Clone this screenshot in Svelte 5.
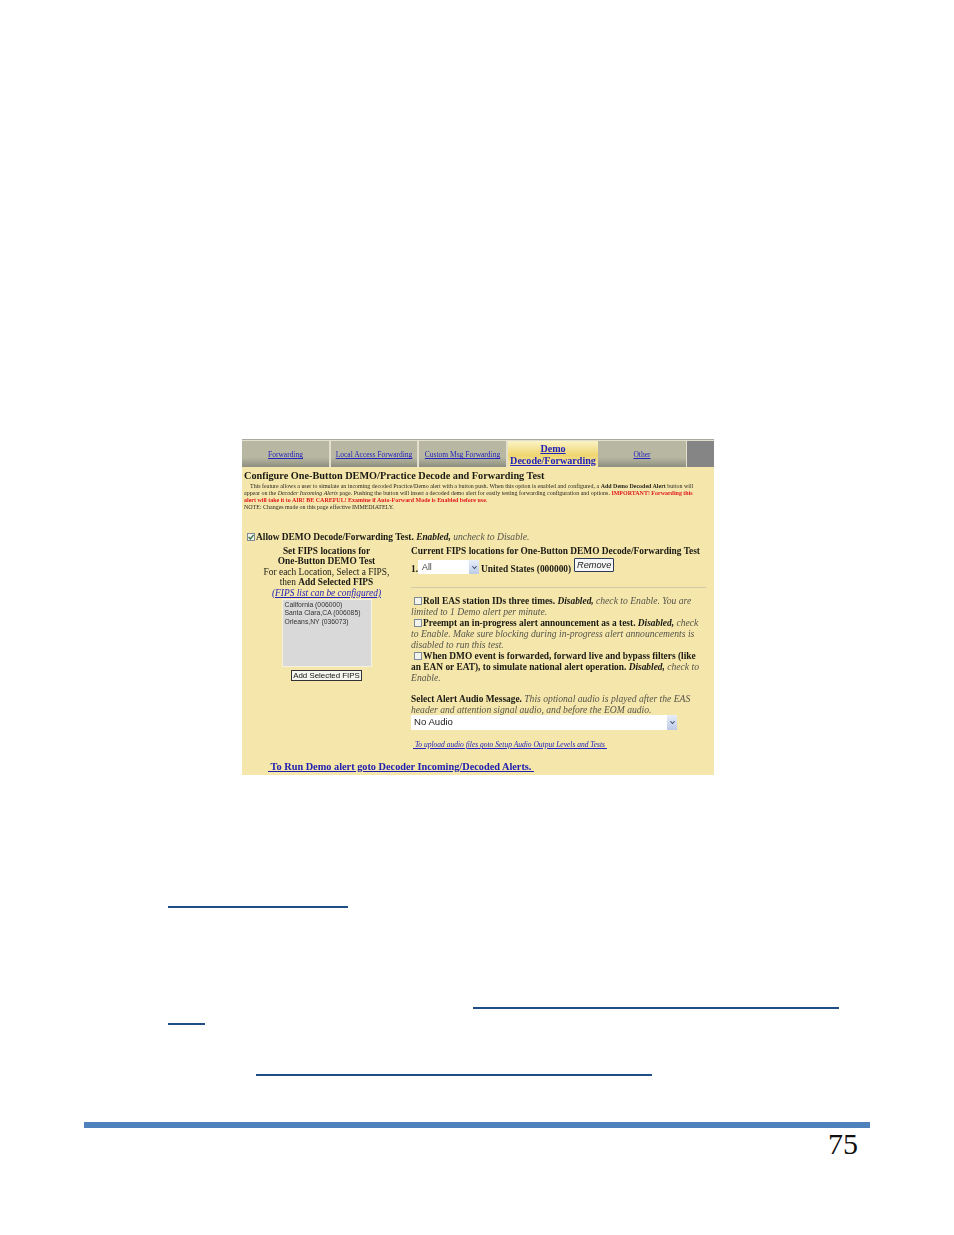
<script>
  const tabs = [
    { label: 'Forwarding', w: 87 },
    { label: 'Local Access Forwarding', w: 86 },
    { label: 'Custom Msg Forwarding', w: 87 }
  ];
</script>

<div class="page">
  <section class="shot">
    <nav class="tabs">
      {#each tabs as t}
        <a class="tab" style="width:{t.w}px" href="#a">{t.label}</a>
      {/each}
      <a class="tab active" href="#a">Demo<br />Decode/Forwarding</a>
      <a class="tab other" href="#a">Other</a>
      <div class="filler"></div>
    </nav>

    <h1>Configure One-Button DEMO/Practice Decode and Forwarding Test</h1>
    <div class="intro">
      <p class="ind">This feature allows a user to simulate an incoming decoded Practice/Demo alert with a button push. When this option is enabled and configured, a <b>Add Demo Decoded Alert</b> button will</p>
      <p>appear on the <i>Decoder Incoming Alerts</i> page. Pushing the button will insert a decoded demo alert for easily testing forwarding configuration and options. <b class="red">IMPORTANT! Forwarding this</b></p>
      <p><b class="red">alert will take it to AIR! BE CAREFUL! Examine if Auto-Forward Mode is Enabled before use.</b></p>
      <p>NOTE: Changes made on this page effective IMMEDIATELY.</p>
    </div>

    <div class="allow">
      <span class="cb on"><svg viewBox="0 0 8 8" width="8" height="8"><path d="M1.6 4 3.4 6 6.5 1.8" fill="none" stroke="#2f6f3a" stroke-width="1.3" /></svg></span>
      <span><b>Allow DEMO Decode/Forwarding Test.</b> <i><b>Enabled,</b> <span class="g">uncheck to Disable.</span></i></span>
    </div>

    <div class="cols">
      <div class="left">
        <b>Set FIPS locations for</b><br />
        <b>One-Button DEMO Test</b><br />
        For each Location, Select a FIPS,<br />
        then <b>Add Selected FIPS</b><br />
        <a class="cfg" href="#a">(FIPS list can be configured)</a>
        <div class="list">
          <div>California (006000)</div>
          <div>Santa Clara,CA (006085)</div>
          <div>Orleans,NY (036073)</div>
        </div>
        <button class="add">Add Selected FIPS</button>
      </div>

      <div class="right">
        <div class="cur"><b>Current FIPS locations for One-Button DEMO Decode/Forwarding Test</b></div>
        <div class="fips">
          <b class="low">1.</b>
          <span class="sel small">All<span class="arrow"><svg viewBox="0 0 8 6" width="7" height="5"><path d="M1.5 1.5 4 4.2 6.5 1.5" fill="none" stroke="#3a4a70" stroke-width="1.3" /></svg></span></span>
          <b class="us low">United States (000000)</b>
          <button class="remove">Remove</button>
        </div>
        <hr />
        <div class="opts">
          <div><span class="cb"></span><b>Roll EAS station IDs three times.</b> <i><b>Disabled,</b> <span class="g">check to Enable. You are</span></i></div>
          <div><i class="g">limited to 1 Demo alert per minute.</i></div>
          <div><span class="cb"></span><b>Preempt an in-progress alert announcement as a test.</b> <i><b>Disabled,</b> <span class="g">check</span></i></div>
          <div><i class="g">to Enable. Make sure blocking during in-progress alert announcements is</i></div>
          <div><i class="g">disabled to run this test.</i></div>
          <div><span class="cb"></span><b>When DMO event is forwarded, forward live and bypass filters (like</b></div>
          <div><b>an EAN or EAT), to simulate national alert operation.</b> <i><b>Disabled,</b> <span class="g">check to</span></i></div>
          <div><i class="g">Enable.</i></div>
        </div>
        <div class="audio">
          <div><b>Select Alert Audio Message.</b> <i class="g">This optional audio is played after the EAS</i></div>
          <div><i class="g">header and attention signal audio, and before the EOM audio.</i></div>
        </div>
        <div class="sel wide">No Audio<span class="arrow"><svg viewBox="0 0 8 6" width="7" height="5"><path d="M1.5 1.5 4 4.2 6.5 1.5" fill="none" stroke="#3a4a70" stroke-width="1.3" /></svg></span></div>
        <a class="upload" href="#a">&nbsp;To upload audio files goto Setup Audio Output Levels and Tests&nbsp;</a>
      </div>
    </div>

    <a class="run" href="#a">&nbsp;To Run Demo alert goto Decoder Incoming/Decoded Alerts.&nbsp;</a>
  </section>

  <div class="rule r1"></div>
  <div class="rule r2"></div>
  <div class="rule r3"></div>
  <div class="rule r4"></div>

  <div class="bar"></div>
  <div class="num">75</div>
</div>

<style>
  :global(body) { margin: 0; background: #fff; }
  .page {
    width: 954px;
    height: 1235px;
    padding-top: 439px;
    box-sizing: border-box;
    overflow: hidden;
    font-family: "Liberation Serif", serif;
  }
  .shot {
    width: 472px;
    height: 336px;
    margin-left: 242px;
    background: #f5e6ab;
    color: #1a1a14;
    font-size: 9.4px;
    line-height: 10.55px;
    overflow: hidden;
    filter: blur(0.35px);
  }
  a { color: #2222bb; }
  .tabs {
    display: flex;
    height: 28px;
    padding-top: 1px;
    border-top: 1px solid #a8a8a0;
    gap: 2px;
    box-sizing: border-box;
    background: #e2e0cc;
  }
  .tab {
    display: flex;
    align-items: center;
    justify-content: center;
    text-align: center;
    box-sizing: border-box;
    padding-top: 3px;
    font-size: 7.5px;
    background: linear-gradient(#b8b8a2 0 62%, #8e8e80 100%);
  }
  .tab.active {
    width: 90px;
    margin-right: -2px;
    padding-top: 1px;
    font-size: 10.1px;
    font-weight: bold;
    line-height: 11.6px;
    background: linear-gradient(#fbf3c6, #efd670 55%, #f5e6ab 100%);
  }
  .tab.other { width: 88px; }
  .filler { flex: 1; background: #858585; margin-left: -1px; }
  h1 {
    margin: 3px 0 0 2px;
    font-size: 10.25px;
    line-height: 12px;
    font-weight: bold;
    white-space: nowrap;
  }
  .intro {
    margin: 1px 0 0 2px;
    font-size: 5.98px;
    line-height: 7px;
    color: #2a2a22;
    white-space: nowrap;
  }
  .intro p { margin: 0; }
  .intro .ind { margin-left: 6px; }
  .red { color: #e01818; }
  .allow {
    margin: 21px 0 0 5px;
    white-space: nowrap;
    display: flex;
    align-items: center;
    gap: 0;
  }
  .g { color: #55554a; font-size: 9.65px; }
  .cb {
    display: inline-flex;
    width: 8px;
    height: 8px;
    box-sizing: border-box;
    border: 1px solid #7f8a99;
    background: #f4f4ee;
    margin-right: 1px;
    vertical-align: -1px;
  }
  .cb svg { margin: -1px; }
  .cols {
    display: grid;
    grid-template-columns: 169px 1fr;
    margin-top: 3px;
  }
  .left { text-align: center; white-space: nowrap; }
  .cfg { font-style: italic; }
  .list {
    width: 90px;
    height: 68px;
    margin: 1px auto 0;
    box-sizing: border-box;
    background: #d9d9d9;
    border: 1px solid #f4f1de;
    text-align: left;
    padding: 1px 2px 0;
    font-family: "Liberation Sans", sans-serif;
    font-size: 6.8px;
    line-height: 8.2px;
    color: #333;
  }
  .add {
    display: block;
    width: 71px;
    height: 11px;
    margin: 3px auto 0;
    padding: 0;
    background: #f6f6f0;
    border: 1px solid #333;
    font-family: "Liberation Sans", sans-serif;
    font-size: 7.9px;
    line-height: 9px;
    color: #111;
  }
  .right { white-space: nowrap; }
  .fips { display: flex; align-items: center; height: 16px; margin-top: 3px; }
  .low { margin-top: 4px; }
  .sel {
    position: relative;
    box-sizing: border-box;
    display: flex;
    align-items: center;
    background: #fff;
    font-family: "Liberation Sans", sans-serif;
    color: #444;
  }
  .sel.small {
    width: 61px;
    height: 14px;
    padding-left: 4px;
    font-size: 8.8px;
    background: linear-gradient(90deg, #fff, #fff 75%, #eef3fb);
  }
  .arrow {
    position: absolute;
    right: 0;
    top: 0;
    bottom: 0;
    width: 10px;
    display: flex;
    align-items: center;
    justify-content: center;
    background: linear-gradient(#e8eef9, #bccbe6);
  }
  .us { margin-left: 2px; }
  .remove {
    width: 40px;
    height: 14px;
    margin: -5px 0 0 3px;
    padding: 0;
    background: #f6f6f6;
    border: 1px solid #2d3a55;
    border-radius: 1px;
    font-family: "Liberation Sans", sans-serif;
    font-style: italic;
    font-size: 9.2px;
    color: #222;
  }
  hr {
    width: 295px;
    margin: 12px 0 0;
    border: 0;
    height: 1px;
    background: #cfc9a8;
  }
  .opts { margin-top: 8px; }
  .opts > div { height: 11px; }
  .opts .cb { margin-left: 3px; }
  .audio { margin-top: 10px; }
  .audio > div:first-child { height: 11px; }
  .audio > div { height: 10px; }
  .sel.wide {
    width: 266px;
    height: 15px;
    padding-left: 3px;
    font-size: 9.6px;
    color: #222;
  }
  .upload {
    display: inline-block;
    margin: 11px 0 0 2px;
    font-size: 7.5px;
    line-height: 8px;
    font-style: italic;
  }
  .run {
    display: block;
    width: fit-content;
    margin: 11px 0 0 26px;
    font-size: 10.3px;
    line-height: 11px;
    font-weight: bold;
    white-space: nowrap;
    color: #2020b0;
  }
  .rule { background: #1f4e85; height: 2px; }
  .r1 { width: 180px; margin: 131px 0 0 168px; }
  .r2 { width: 366px; margin: 99px 0 0 473px; }
  .r3 { width: 37px; margin: 14px 0 0 168px; }
  .r4 { width: 396px; margin: 49px 0 0 256px; }
  .bar { width: 786px; height: 6px; margin: 46px 0 0 84px; background: #4f81bd; }
  .num {
    width: 774px;
    margin: 0 0 0 84px;
    padding-top: 1px;
    text-align: right;
    font-family: "Liberation Serif", serif;
    font-size: 30px;
    line-height: 30px;
    color: #111;
  }
</style>
